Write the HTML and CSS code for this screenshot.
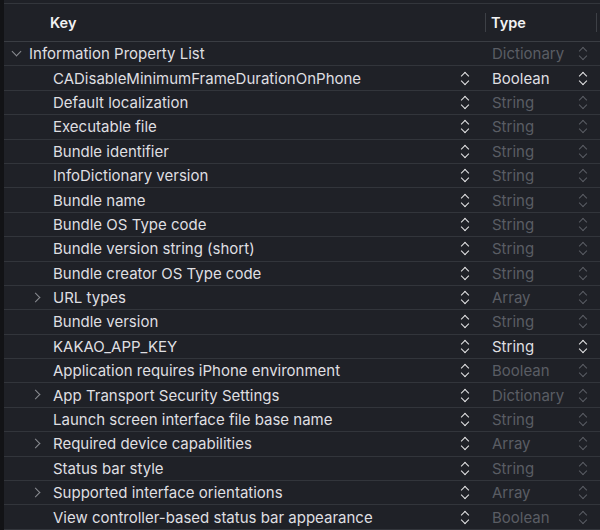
FILE: index.html
```html
<!DOCTYPE html>
<html>
<head>
    <link rel="stylesheet" href="styles.css">
</head>
<body>
    <div class="plist">
        <div class="top-band"></div>
        <div class="header">
            <div class="col-key">Key</div>
            <div class="col-type">Type</div>
        </div>

        <div class="row root">
            <div class="col-key"><span class="disclosure open"></span>Information Property List</div>
            <div class="col-type dim">Dictionary<span class="stepper"></span></div>
        </div>

        <div class="row">
            <div class="col-key"><span class="disclosure"></span>CADisableMinimumFrameDurationOnPhone<span class="stepper"></span></div>
            <div class="col-type">Boolean<span class="stepper"></span></div>
        </div>
        <div class="row">
            <div class="col-key"><span class="disclosure"></span>Default localization<span class="stepper"></span></div>
            <div class="col-type dim">String<span class="stepper"></span></div>
        </div>
        <div class="row">
            <div class="col-key"><span class="disclosure"></span>Executable file<span class="stepper"></span></div>
            <div class="col-type dim">String<span class="stepper"></span></div>
        </div>
        <div class="row">
            <div class="col-key"><span class="disclosure"></span>Bundle identifier<span class="stepper"></span></div>
            <div class="col-type dim">String<span class="stepper"></span></div>
        </div>
        <div class="row">
            <div class="col-key"><span class="disclosure"></span>InfoDictionary version<span class="stepper"></span></div>
            <div class="col-type dim">String<span class="stepper"></span></div>
        </div>
        <div class="row">
            <div class="col-key"><span class="disclosure"></span>Bundle name<span class="stepper"></span></div>
            <div class="col-type dim">String<span class="stepper"></span></div>
        </div>
        <div class="row">
            <div class="col-key"><span class="disclosure"></span>Bundle OS Type code<span class="stepper"></span></div>
            <div class="col-type dim">String<span class="stepper"></span></div>
        </div>
        <div class="row">
            <div class="col-key"><span class="disclosure"></span>Bundle version string (short)<span class="stepper"></span></div>
            <div class="col-type dim">String<span class="stepper"></span></div>
        </div>
        <div class="row">
            <div class="col-key"><span class="disclosure"></span>Bundle creator OS Type code<span class="stepper"></span></div>
            <div class="col-type dim">String<span class="stepper"></span></div>
        </div>
        <div class="row">
            <div class="col-key"><span class="disclosure closed"></span>URL types<span class="stepper"></span></div>
            <div class="col-type dim">Array<span class="stepper"></span></div>
        </div>
        <div class="row">
            <div class="col-key"><span class="disclosure"></span>Bundle version<span class="stepper"></span></div>
            <div class="col-type dim">String<span class="stepper"></span></div>
        </div>
        <div class="row">
            <div class="col-key"><span class="disclosure"></span>KAKAO_APP_KEY<span class="stepper"></span></div>
            <div class="col-type">String<span class="stepper"></span></div>
        </div>
        <div class="row">
            <div class="col-key"><span class="disclosure"></span>Application requires iPhone environment<span class="stepper"></span></div>
            <div class="col-type dim">Boolean<span class="stepper"></span></div>
        </div>
        <div class="row">
            <div class="col-key"><span class="disclosure closed"></span>App Transport Security Settings<span class="stepper"></span></div>
            <div class="col-type dim">Dictionary<span class="stepper"></span></div>
        </div>
        <div class="row">
            <div class="col-key"><span class="disclosure"></span>Launch screen interface file base name<span class="stepper"></span></div>
            <div class="col-type dim">String<span class="stepper"></span></div>
        </div>
        <div class="row">
            <div class="col-key"><span class="disclosure closed"></span>Required device capabilities<span class="stepper"></span></div>
            <div class="col-type dim">Array<span class="stepper"></span></div>
        </div>
        <div class="row">
            <div class="col-key"><span class="disclosure"></span>Status bar style<span class="stepper"></span></div>
            <div class="col-type dim">String<span class="stepper"></span></div>
        </div>
        <div class="row">
            <div class="col-key"><span class="disclosure closed"></span>Supported interface orientations<span class="stepper"></span></div>
            <div class="col-type dim">Array<span class="stepper"></span></div>
        </div>
        <div class="row">
            <div class="col-key"><span class="disclosure"></span>View controller-based status bar appearance<span class="stepper"></span></div>
            <div class="col-type dim">Boolean<span class="stepper"></span></div>
        </div>
    </div>
</body>
</html>
```

FILE: styles.css
```css
body {
    margin: 0;
    background: #1f2127;
    font-family: Inter, "Noto Sans", sans-serif;
    font-size: 15px;
    color: #dfdfe1;
    overflow: hidden;
}

.plist {
    height: 530px;
    border-left: 4px solid #121316;
}

.top-band {
    height: 3px;
    border-bottom: 1px solid #33363c;
}

.header,
.row {
    display: grid;
    grid-template-columns: 481px 112px;
    align-items: stretch;
}

.header {
    height: 37px;
    border-bottom: 1px solid #3a3d43;
    font-weight: 600;
    font-size: 14.5px;
    color: #f2f2f3;
}

.header .col-key {
    display: flex;
    align-items: center;
    padding-left: 46px;
}

.header .col-type {
    display: flex;
    align-items: center;
    padding-left: 5px;
    border-left: 1px solid #3d4046;
    margin: 9px 0;
    border-right: 1px solid #3d4046;
}

.row {
    height: 23.4px;
    border-bottom: 1px solid #32353b;
}

.col-key,
.col-type {
    display: flex;
    align-items: center;
    white-space: nowrap;
}

.row .col-key {
    padding-left: 25px;
    padding-right: 15px;
}

.row.root .col-key {
    padding-left: 1px;
}

.row .col-type {
    padding-left: 7px;
    padding-right: 9px;
}

.dim {
    color: #5a5d64;
}

.disclosure {
    width: 24px;
    height: 14px;
    flex: none;
    position: relative;
}

.disclosure.open::before,
.disclosure.closed::before {
    content: '';
    position: absolute;
    width: 6px;
    height: 6px;
    border-right: 1.6px solid #8b8d92;
    border-bottom: 1.6px solid #8b8d92;
}

.disclosure.open::before {
    left: 8px;
    top: 1px;
    transform: rotate(45deg);
}

.disclosure.closed::before {
    left: 3px;
    top: 3px;
    transform: rotate(-45deg);
}

.stepper {
    margin-left: auto;
    width: 10px;
    height: 15px;
    flex: none;
    position: relative;
}

.stepper::before,
.stepper::after {
    content: '';
    position: absolute;
    left: 2px;
    width: 5px;
    height: 5px;
    border-left: 1.6px solid #e6e6e8;
    border-top: 1.6px solid #e6e6e8;
}

.stepper::before {
    top: 2px;
    transform: rotate(45deg);
}

.stepper::after {
    top: 7px;
    transform: rotate(-135deg);
}

.dim .stepper::before,
.dim .stepper::after {
    border-color: #5a5d64;
}
```
